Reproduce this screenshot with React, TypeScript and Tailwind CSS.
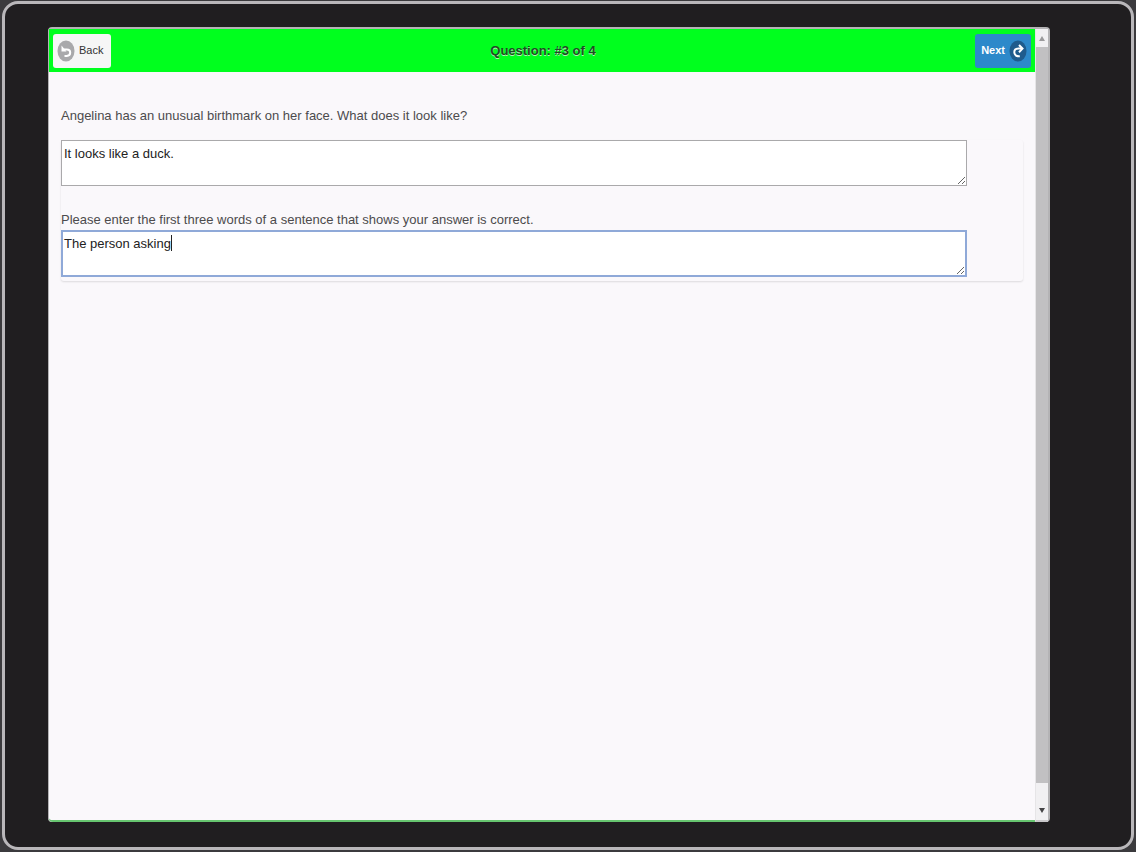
import { useState } from "react";

const BackIcon: React.FC<{}> = () => (
  <svg width="18" height="22" viewBox="0 0 18 22" className="shrink-0" aria-hidden="true">
    <ellipse cx="9" cy="11" rx="8.5" ry="10.5" fill="#a9a9ab" />
    <path d="M4.500 5.500v6h5z" fill="#fff" />
    <path
      d="M6.500 9.500h3.300c2.200 0 3.400 1.200 3.400 3.100 0 2-1.300 3.300-3.400 3.300H7.500"
      fill="none"
      stroke="#fff"
      strokeWidth="2"
    />
  </svg>
);

const NextIcon: React.FC<{}> = () => (
  <svg width="18" height="22" viewBox="0 0 18 22" className="shrink-0" aria-hidden="true">
    <ellipse cx="9" cy="11" rx="8.5" ry="10.500" fill="#1f5b8c" />
    <path
      d="M10.800 16.200C7.300 16.500 5.300 14.900 5.300 12.300 5.300 9.800 7 8.600 9.500 8.600h3"
      fill="none"
      stroke="#fff"
      strokeWidth="2"
    />
    <path d="M10 5l3.500 3.600L10 12.200" fill="none" stroke="#fff" strokeWidth="2" />
  </svg>
);

const ScrollBar: React.FC<{}> = () => {
  return (
    <div className="flex w-[13px] shrink-0 flex-col border-b-2 border-l border-b-[#c9c8ca] border-l-[#e6e5e7] bg-[#f1f0f2]">
      <button type="button" aria-label="Scroll up" className="flex h-[18px] items-center justify-center">
        <svg width="6" height="5" viewBox="0 0 6 5">
          <path d="M3 0 6 5H0z" fill="#9a999b" />
        </svg>
      </button>
      <div className="flex-1 bg-[#c1c0c2]" />
      <button type="button" aria-label="Scroll down" className="flex h-[37px] items-end justify-center pb-[7px]">
        <svg width="6" height="5" viewBox="0 0 6 5">
          <path d="M0 0h6L3 5z" fill="#454446" />
        </svg>
      </button>
    </div>
  );
};

const App: React.FC<{}> = () => {
  const [answer, setAnswer] = useState("It looks like a duck.");
  const [evidence, setEvidence] = useState("The person asking");
  const [pristine, setPristine] = useState(true);

  return (
    <div className="flex min-h-screen bg-[#3b3a3d] p-0.5 pt-px font-['Liberation_Sans',Arial,sans-serif]">
      <div className="flex flex-1 rounded-2xl border-[3px] border-[#b9b7ba] bg-[#201e20] pt-[23px] pr-[81px] pb-[25px] pl-[43px]">
        <div className="flex min-w-0 flex-1 rounded border-2 border-b-0 border-l border-[#b4b3b5] bg-[#f1f0f2]">
          <div className="flex min-w-0 flex-1 flex-col rounded-bl border-b-2 border-[#67c570] bg-[#faf8fb]">
            <header className="flex h-[43px] items-center justify-between bg-[#00ff1e] px-1">
              <button
                type="button"
                className="flex h-[34px] w-[58px] items-center gap-1 rounded-[3px] bg-[#f6f6f6] pl-1 text-[11px] text-[#333]"
              >
                <BackIcon />
                Back
              </button>
              <h1 className="text-[13px] font-bold text-[#1d4d22] [text-shadow:0_1px_0_#b5efb9]">
                Question: #3 of 4
              </h1>
              <button
                type="button"
                className="flex h-[34px] w-14 items-center justify-end gap-1 rounded-[3px] bg-[#2d89ca] pr-1 text-[11px] font-bold text-white"
              >
                Next
                <NextIcon />
              </button>
            </header>
            <main className="px-3 pt-[34px] text-[13px] text-[#4c4b4d]">
              <label htmlFor="answer" className="block h-[34px] leading-5">
                Angelina has an unusual birthmark on her face. What does it look like?
              </label>
              <div className="rounded-[3px] pr-14 pb-1 shadow-[0_1px_2px_rgba(0,0,0,0.12)]">
                <textarea
                  id="answer"
                  value={answer}
                  onChange={(e) => setAnswer(e.target.value)}
                  className="block h-[46px] w-full border border-[#aaa9ab] bg-white px-0.5 pt-[3px] leading-5 text-[#222] outline-none"
                />
                <label htmlFor="evidence" className="mt-6 block leading-5">
                  Please enter the first three words of a sentence that shows your answer is correct.
                </label>
                <div className="relative">
                  <textarea
                    id="evidence"
                    value={evidence}
                    onFocus={() => setPristine(false)}
                    onChange={(e) => setEvidence(e.target.value)}
                    className="block h-[47px] w-full border-2 border-[#8fa9d8] bg-white px-px pt-0.5 leading-5 text-[#222] outline-none"
                  />
                  {/* resting caret, until the field takes focus */}
                  {pristine && <span className="absolute top-[5px] left-[110px] h-4 w-px bg-[#222]" />}
                </div>
              </div>
            </main>
          </div>
          <ScrollBar />
        </div>
      </div>
    </div>
  );
};

export default App;
